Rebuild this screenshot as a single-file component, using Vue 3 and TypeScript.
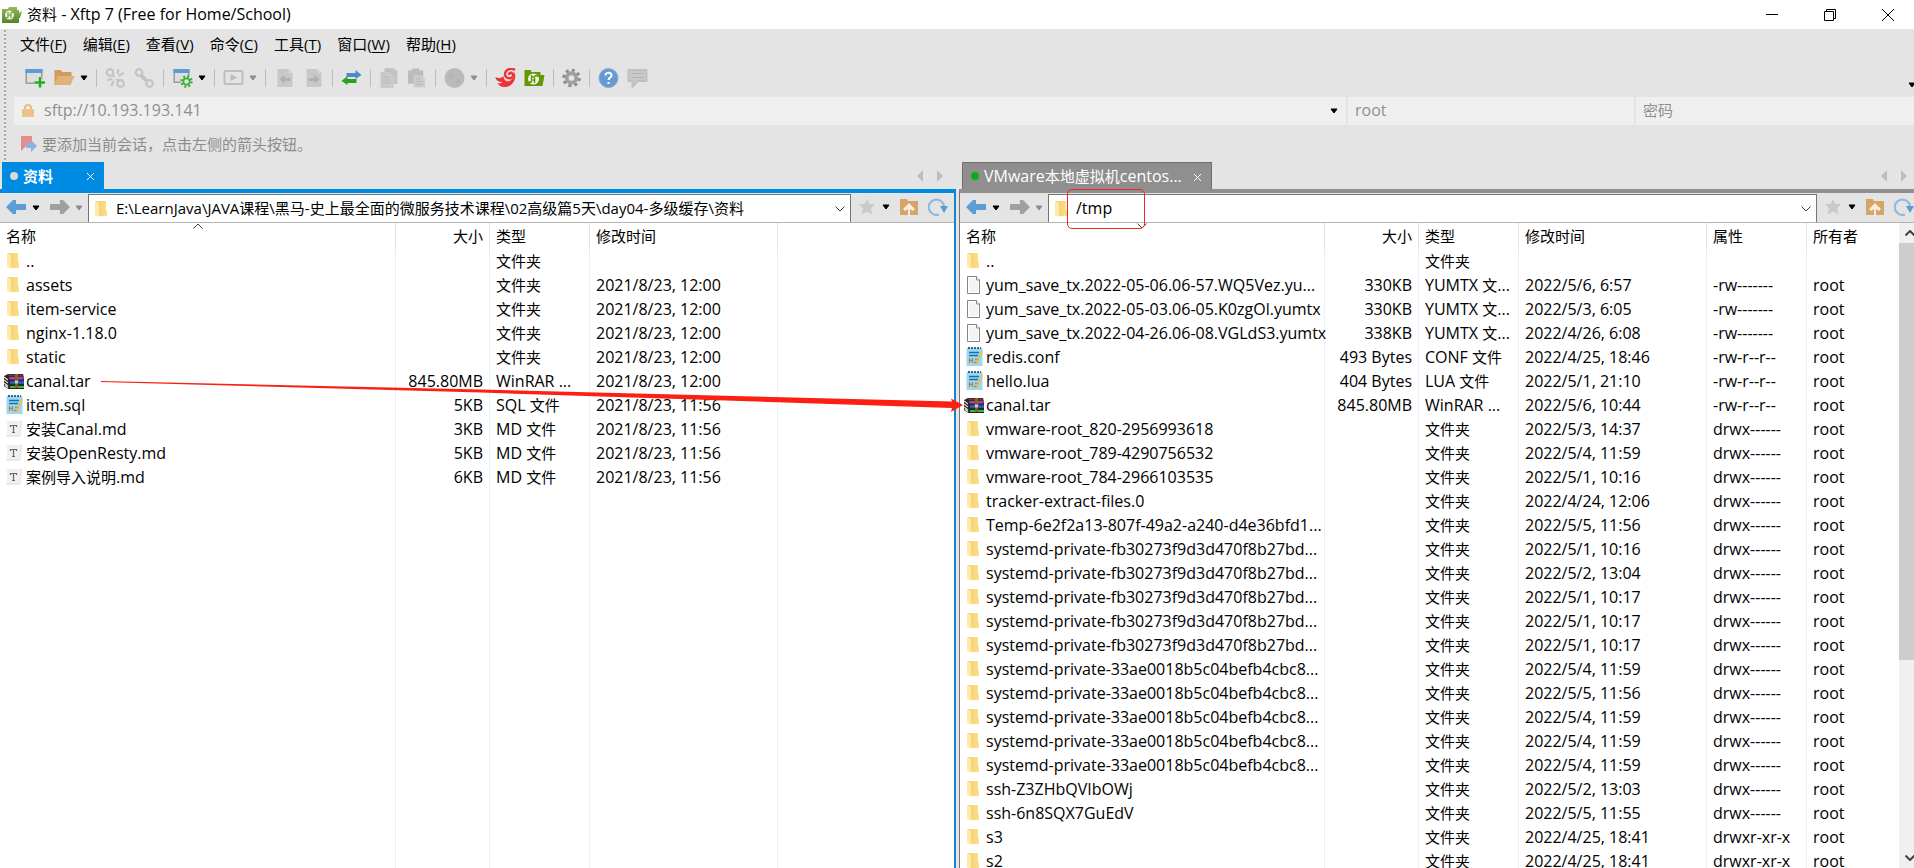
<script setup lang="ts">
interface FileRow {
  icon: 'folder' | 'file' | 'note' | 'rar' | 'md'
  name: string
  size?: string
  type: string
  date?: string
  attr?: string
  owner?: string
}

interface Run {
  text: string
  latin: boolean
}

// Latin runs are set one pixel larger than Chinese ones.
const runs = (text = ''): Run[] =>
  (text.match(/[\x20-\x7e]+|[^\x20-\x7e]+/g) ?? []).map((t) => ({ text: t, latin: t.charCodeAt(0) < 127 }))

const menus = [
  ['文件', 'F'],
  ['编辑', 'E'],
  ['查看', 'V'],
  ['命令', 'C'],
  ['工具', 'T'],
  ['窗口', 'W'],
  ['帮助', 'H'],
]

const tools = [
  'new', 'open', 'drop', 'sep',
  'unlink', 'link', 'sep',
  'props', 'drop', 'sep',
  'run', 'drop-off', 'sep',
  'left', 'right', 'sep',
  'swap', 'sep',
  'copy', 'paste', 'sep',
  'globe', 'drop-off', 'sep',
  'shell', 'xftp', 'sep',
  'gear', 'sep',
  'help', 'chat',
]

const toolLabels: Record<string, string> = {
  new: '新建', open: '打开', drop: '更多', unlink: '断开', link: '连接', props: '属性',
  run: '运行', 'drop-off': '更多', left: '向左传输', right: '向右传输', swap: '同步',
  copy: '复制', paste: '粘贴', globe: '浏览', shell: 'Xshell', xftp: 'Xftp',
  gear: '选项', help: '帮助', chat: '反馈',
}

const dir = (name: string, date?: string): FileRow => ({ icon: 'folder', name, type: '文件夹', date })

const localRows: FileRow[] = [
  dir('..'),
  dir('assets', '2021/8/23, 12:00'),
  dir('item-service', '2021/8/23, 12:00'),
  dir('nginx-1.18.0', '2021/8/23, 12:00'),
  dir('static', '2021/8/23, 12:00'),
  { icon: 'rar', name: 'canal.tar', size: '845.80MB', type: 'WinRAR ...', date: '2021/8/23, 12:00' },
  { icon: 'note', name: 'item.sql', size: '5KB', type: 'SQL 文件', date: '2021/8/23, 11:56' },
  { icon: 'md', name: '安装Canal.md', size: '3KB', type: 'MD 文件', date: '2021/8/23, 11:56' },
  { icon: 'md', name: '安装OpenResty.md', size: '5KB', type: 'MD 文件', date: '2021/8/23, 11:56' },
  { icon: 'md', name: '案例导入说明.md', size: '6KB', type: 'MD 文件', date: '2021/8/23, 11:56' },
]

const rdir = (name: string, date: string, attr = 'drwx------'): FileRow => ({
  ...dir(name, date), attr, owner: 'root',
})

const remoteRows: FileRow[] = [
  dir('..'),
  { icon: 'file', name: 'yum_save_tx.2022-05-06.06-57.WQ5Vez.yu...', size: '330KB', type: 'YUMTX 文...', date: '2022/5/6, 6:57', attr: '-rw-------', owner: 'root' },
  { icon: 'file', name: 'yum_save_tx.2022-05-03.06-05.K0zgOl.yumtx', size: '330KB', type: 'YUMTX 文...', date: '2022/5/3, 6:05', attr: '-rw-------', owner: 'root' },
  { icon: 'file', name: 'yum_save_tx.2022-04-26.06-08.VGLdS3.yumtx', size: '338KB', type: 'YUMTX 文...', date: '2022/4/26, 6:08', attr: '-rw-------', owner: 'root' },
  { icon: 'note', name: 'redis.conf', size: '493 Bytes', type: 'CONF 文件', date: '2022/4/25, 18:46', attr: '-rw-r--r--', owner: 'root' },
  { icon: 'note', name: 'hello.lua', size: '404 Bytes', type: 'LUA 文件', date: '2022/5/1, 21:10', attr: '-rw-r--r--', owner: 'root' },
  { icon: 'rar', name: 'canal.tar', size: '845.80MB', type: 'WinRAR ...', date: '2022/5/6, 10:44', attr: '-rw-r--r--', owner: 'root' },
  rdir('vmware-root_820-2956993618', '2022/5/3, 14:37'),
  rdir('vmware-root_789-4290756532', '2022/5/4, 11:59'),
  rdir('vmware-root_784-2966103535', '2022/5/1, 10:16'),
  rdir('tracker-extract-files.0', '2022/4/24, 12:06'),
  rdir('Temp-6e2f2a13-807f-49a2-a240-d4e36bfd1...', '2022/5/5, 11:56'),
  rdir('systemd-private-fb30273f9d3d470f8b27bd...', '2022/5/1, 10:16'),
  rdir('systemd-private-fb30273f9d3d470f8b27bd...', '2022/5/2, 13:04'),
  rdir('systemd-private-fb30273f9d3d470f8b27bd...', '2022/5/1, 10:17'),
  rdir('systemd-private-fb30273f9d3d470f8b27bd...', '2022/5/1, 10:17'),
  rdir('systemd-private-fb30273f9d3d470f8b27bd...', '2022/5/1, 10:17'),
  rdir('systemd-private-33ae0018b5c04befb4cbc8...', '2022/5/4, 11:59'),
  rdir('systemd-private-33ae0018b5c04befb4cbc8...', '2022/5/5, 11:56'),
  rdir('systemd-private-33ae0018b5c04befb4cbc8...', '2022/5/4, 11:59'),
  rdir('systemd-private-33ae0018b5c04befb4cbc8...', '2022/5/4, 11:59'),
  rdir('systemd-private-33ae0018b5c04befb4cbc8...', '2022/5/4, 11:59'),
  rdir('ssh-Z3ZHbQVIbOWj', '2022/5/2, 13:03'),
  rdir('ssh-6n8SQX7GuEdV', '2022/5/5, 11:55'),
  rdir('s3', '2022/4/25, 18:41', 'drwxr-xr-x'),
  rdir('s2', '2022/4/25, 18:41', 'drwxr-xr-x'),
]

const panes = [
  {
    key: 'local',
    tab: '资料',
    path: 'E:\\LearnJava\\JAVA课程\\黑马-史上最全面的微服务技术课程\\02高级篇5天\\day04-多级缓存\\资料',
    rows: localRows,
    remote: false,
  },
  { key: 'remote', tab: 'VMware本地虚拟机centos...', path: '/tmp', rows: remoteRows, remote: true },
]

const cells = (r: FileRow, remote: boolean) => (remote ? [r.type, r.date, r.attr, r.owner] : [r.type, r.date, ''])
</script>

<template>
  <div class="window">
    <svg class="defs" aria-hidden="true">
      <defs>
        <linearGradient id="gold" x1="0" x2="1"><stop offset="0" stop-color="#f3cf6c" /><stop offset="1" stop-color="#fbdf89" /></linearGradient>
        <linearGradient id="mint" x1="0" y1="0" x2="0" y2="1"><stop offset="0" stop-color="#93b955" /><stop offset="1" stop-color="#53852b" /></linearGradient>
        <symbol id="i-folder" viewBox="0 0 20 20">
          <path d="M2 2h10v9l1 1v5H3z" fill="url(#gold)" />
          <path d="M1 2l4 2v14l-4-2z" fill="#ffe9a6" />
        </symbol>
        <symbol id="i-file" viewBox="0 0 20 20">
          <path d="M1.500 1.500h9l3 3v14h-12z" fill="#fff" stroke="#858585" />
          <path d="M3 3h7v3h2v11H3z" fill="#f4f4f4" />
          <path d="M10.500 1.500v3.500h3.500" fill="#fff" stroke="#858585" />
        </symbol>
        <symbol id="i-note" viewBox="0 0 20 20">
          <rect x="0.500" y="1" width="16" height="18" rx="1" fill="#9fd6f3" />
          <path d="M2 1h2M5 1h2M8 1h2M11 1h2M14 1h1" stroke="#3c667e" stroke-width="2" />
          <path d="M3 5.500h10M3 8.500h9" stroke="#087aa5" stroke-width="1.500" />
          <path d="M3.500 11v5M6.500 11v5M3.500 13.500h3M9 12.500h4M8 15.500h4" stroke="#b48743" stroke-width="1.300" fill="none" />
          <path d="M16 4l-5 12" stroke="#efbc43" stroke-width="1.800" />
        </symbol>
        <symbol id="i-md" viewBox="0 0 20 20">
          <path d="M1 3l15-1-1 15-3 1H-1l2-2z" fill="#e9e9e9" />
          <path d="M1 2h13v14H1z" fill="#f0f0f0" />
          <path d="M4.500 6.500h6M7.500 6.500v7M6 13.500h3M4.500 6v2M10.500 6v2" stroke="#686868" stroke-width="1.200" fill="none" />
        </symbol>
        <symbol id="i-rar" viewBox="0 0 20 20">
          <path d="M0 5l4-2h15l1 4v11H4l-4-3z" fill="#29251f" />
          <path d="M3 3.500h15l1 2H5z" fill="#663542" />
          <path d="M5 6h14.500v2.500H6z" fill="#a944a0" />
          <path d="M6 10h14v3H6z" fill="#2355d5" />
          <path d="M6 15h14v2H6z" fill="#20c33d" />
          <path d="M0 6l4 3M0 9l4 3M0 12l4 3M1 14l3 3" stroke="#ddd" stroke-width="1.200" />
          <path d="M12.500 3v14" stroke="#8d5c26" stroke-width="3" />
          <path d="M10.500 9h4v4h-4z" fill="#ccc" stroke="#555" />
        </symbol>
        <symbol id="i-new" viewBox="0 0 20 20">
          <path d="M0 1h17v15H0z" fill="#9b9b9b" /><path d="M1.500 5h14v9.500h-14z" fill="#dedede" /><path d="M0 1h17v4H0z" fill="#5a9cd5" />
          <path d="M14.500 9v10M9 14h10.500" stroke="#e4e4e4" stroke-width="4" /><path d="M14.500 9v10.500M9 14.500h10.500" stroke="#25ad21" stroke-width="2.500" />
        </symbol>
        <symbol id="i-open" viewBox="0 0 20 20">
          <path d="M0 2h6l2 2h9v4h2l-3 9H0z" fill="#cf9c5e" /><path d="M3 8h17l-4 9H0z" fill="#dfb27a" />
        </symbol>
        <symbol id="i-unlink" viewBox="0 0 20 20">
          <g fill="none" stroke="#c4c4c4" stroke-width="2.200"><circle cx="4.500" cy="4.500" r="3.300" /><circle cx="15" cy="15.500" r="3.300" /><path d="M7 7l2 2M11 11l2 2M13 1l-1 5M18 5l-5 3M2 12l5-1M6 18l2-5" /></g>
        </symbol>
        <symbol id="i-link" viewBox="0 0 20 20">
          <g fill="none" stroke="#c4c4c4" stroke-width="2.200"><circle cx="4.500" cy="4.500" r="3.300" /><circle cx="15" cy="15.500" r="3.300" /><path d="M7 6l6 7M6 8l5 5" /></g>
        </symbol>
        <symbol id="i-props" viewBox="0 0 20 20">
          <path d="M1 1h16v14H1z" fill="#9b9b9b" /><path d="M2.500 5h13v8.500h-13z" fill="#dedede" /><path d="M1 1h16v4H1z" fill="#5a9cd5" />
          <circle cx="14" cy="13.500" r="6" fill="#e4e4e4" /><circle cx="14" cy="13.500" r="5" fill="none" stroke="#3bb338" stroke-width="2.400" stroke-dasharray="1.960" />
          <circle cx="14" cy="13.500" r="3.200" fill="#e4e4e4" stroke="#3bb338" stroke-width="1.800" />
        </symbol>
        <symbol id="i-run" viewBox="0 0 20 20">
          <rect x="1" y="3" width="18" height="13" rx="1" fill="none" stroke="#bfbfbf" stroke-width="2" /><path d="M7 6l7 3.500L7 13z" fill="#bcbcbc" />
        </symbol>
        <symbol id="i-left" viewBox="0 0 20 20"><path d="M3 1h11l4 4v14H3z" fill="#c8c8c8" /><path d="M14 1v4h4" fill="#d8d8d8" /><path d="M5 11l5-4v3h6v3h-6v3z" fill="#b0b0b0" /></symbol>
        <symbol id="i-right" viewBox="0 0 20 20"><path d="M3 1h11l4 4v14H3z" fill="#c8c8c8" /><path d="M14 1v4h4" fill="#d8d8d8" /><path d="M16 11l-5-4v3H5v3h6v3z" fill="#b0b0b0" /></symbol>
        <symbol id="i-swap" viewBox="0 0 20 20"><path d="M5 5h9V2l6 5-6 4V9H5z" fill="#4c8bd0" /><path d="M15 11H6V8l-6 5 6 4v-2h9z" fill="#29a31f" /></symbol>
        <symbol id="i-copy" viewBox="0 0 20 20"><path d="M5 0h9l4 3v13H5z" fill="#c4c4c4" /><path d="M1 4h9l4 4v12H1z" fill="#cacaca" /><path d="M3 9h7M3 12h8M3 15h8M7 3h5M13 6h3" stroke="#b8b8b8" /></symbol>
        <symbol id="i-paste" viewBox="0 0 20 20"><path d="M0 2h4V0h8v2h4v14H0z" fill="#bcbcbc" /><path d="M6 7h8l4 4v9H6z" fill="#cdcdcd" /><path d="M8 11h5M8 14h8M8 17h8" stroke="#b5b5b5" /></symbol>
        <symbol id="i-globe" viewBox="0 0 20 20"><circle cx="10" cy="10" r="10" fill="#bababa" /><path d="M5 4l5 2-2 5-5-1zM12 10l4 2-2 5-3-2z" fill="#b4b4b4" /></symbol>
        <symbol id="i-shell" viewBox="0 0 20 20">
          <path d="M0 9c3 2 6 1 8-1 0 4 3 6 6 5 3-1 5-4 5-10 3 9-3 16-10 16-4 0-6-2-7-4 2 1 4 0 5-1-4 0-7-2-7-5z" fill="#ed3338" />
          <path d="M19.500 2C16-.5 10 1 9.500 6c0 5 8 6 8 1 0-3-4-3-4 0" fill="none" stroke="#ed3338" stroke-width="2.400" />
        </symbol>
        <symbol id="i-xftp" viewBox="0 0 20 20"><path d="M0 2h6l1 2h9v3h4l-2 11H0z" fill="#649704" /><circle cx="9" cy="11" r="5.500" fill="#f1f6e9" /><path d="M7 7v6c0 2-2 2-2 0M7 9h3M10 15V9c0-2 3-2 3 0M8 12h3" fill="none" stroke="#649704" stroke-width="1.400" /></symbol>
        <symbol id="i-gear" viewBox="0 0 20 20"><circle cx="10" cy="10" r="8" fill="none" stroke="#8d8d8d" stroke-width="3.500" stroke-dasharray="3.140" /><circle cx="10" cy="10" r="5" fill="none" stroke="#a0a0a0" stroke-width="4" /></symbol>
        <symbol id="i-help" viewBox="0 0 20 20"><circle cx="10" cy="10" r="9.500" fill="#659bd0" stroke="#8badce" /><path d="M7 7.500c0-4 6.500-3.500 6 0 0 2-3 2-3 4.500M10 14v2" fill="none" stroke="#fff" stroke-width="2" /></symbol>
        <symbol id="i-chat" viewBox="0 0 20 20"><path d="M1 2h18v11h-9l-5 6v-6H1z" fill="#c9c9c9" stroke="#c0c0c0" stroke-width="2" stroke-linejoin="round" /><path d="M4 5.500h12M4 9.500h12" stroke="#b5b5b5" /></symbol>
        <symbol id="i-drop" viewBox="0 0 8 20"><path d="M1 8h6L4 12z" fill="#000" stroke="#000" /></symbol>
        <symbol id="i-drop-off" viewBox="0 0 8 20"><path d="M1 8h6L4 12z" fill="#8b8b8b" stroke="#8b8b8b" /></symbol>
        <symbol id="i-arrow" viewBox="0 0 20 16"><path d="M0 8l7-7h3v4h10v6H10v4H7z" /></symbol>
        <symbol id="i-chevron" viewBox="0 0 10 6"><path d="M0.500 0.500l4.500 4.500 4.500-4.500" fill="none" stroke="#404040" stroke-width="var(--chev, 1)" /></symbol>
        <symbol id="i-star" viewBox="0 0 18 18"><path d="M9 1l2.500 5H17l-4 4.500 1.500 6L9 13.500l-5.500 3 1.500-6L1 6h5.500z" fill="#cacaca" /></symbol>
        <symbol id="i-up" viewBox="0 0 18 18"><path d="M0 1h7l1 2h10v14H0z" fill="#d8a465" /><path d="M9 5l6 6-2 2-3-2v7H8v-7l-3 2-2-2z" fill="#f5eee5" /></symbol>
        <symbol id="i-refresh" viewBox="0 0 20 18"><path d="M11 16.500A7.700 7.700 0 1 1 16 8" fill="none" stroke="#8fb8de" stroke-width="2.200" /><path d="M12 8h8l-4 7z" fill="#5b9bd5" /></symbol>
      </defs>
    </svg>

    <header class="titlebar">
      <svg class="logo" viewBox="0 0 20 16"><path d="M0 2h6l1-2h8v3h2v3l3-2-2 7h-1v5H0z" fill="url(#mint)" /><circle cx="7.500" cy="8" r="4.500" fill="#edf5df" /><path d="M6 5v5c0 1-2 1-2 0M9 11V6c0-1 2-1 2 0M6 8h3" fill="none" stroke="#6b9b3a" stroke-width="1.200" /></svg>
      <h1>资料<span class="latin"> - Xftp 7 (Free for Home/School)</span></h1>
      <div class="win-buttons">
        <button aria-label="最小化"><svg viewBox="0 0 12 12"><path d="M0 5.500h12" /></svg></button>
        <button aria-label="还原"><svg viewBox="0 0 12 12"><path d="M0.500 2.500h9v9h-9zM2.500 2.500v-2h9v9h-2" /></svg></button>
        <button aria-label="关闭"><svg viewBox="0 0 12 12"><path d="M0 0l12 12M12 0L0 12" /></svg></button>
      </div>
    </header>

    <div class="bars">
      <nav class="menubar">
        <button v-for="m in menus" :key="m[1]">{{ m[0] }}(<u>{{ m[1] }}</u>)</button>
      </nav>
      <div class="toolbar">
        <template v-for="(t, i) in tools" :key="i">
          <span v-if="t === 'sep'" class="sep"></span>
          <button v-else :class="['tool', t]" :aria-label="toolLabels[t]"><svg><use :href="'#i-' + t" /></svg></button>
        </template>
        <button class="tool overflow" aria-label="工具栏选项"><svg><use href="#i-drop" /></svg></button>
      </div>
      <div class="session">
        <label class="field host">
          <svg class="lock" viewBox="0 0 12 14"><path d="M3 7V4a3 3 0 0 1 6 0v3" fill="none" stroke="#e6bd83" stroke-width="2" /><rect y="5" width="12" height="8" rx="1" fill="#eac28b" /></svg>
          <input class="latin" aria-label="主机" value="sftp://10.193.193.141" />
          <button class="tool drop" aria-label="历史"><svg><use href="#i-drop" /></svg></button>
        </label>
        <div class="field user"><input class="latin" aria-label="用户名" placeholder="root" /></div>
        <div class="field pass"><input aria-label="密码" type="password" placeholder="密码" /></div>
      </div>
      <div class="hint">
        <svg viewBox="0 0 16 16"><path d="M0 0h11v10H5l-5 5z" fill="#e58c8c" /><path d="M5 7h5V4l6 6-6 6v-4H5z" fill="#8fb2d8" /></svg>
        <span>要添加当前会话，点击左侧的箭头按钮。</span>
      </div>
    </div>

    <main class="panes">
      <section v-for="p in panes" :key="p.key" :class="['pane', p.key]">
        <div class="tabs">
          <div class="tab"><i class="dot"></i><span><span v-for="(t, k) in runs(p.tab)" :key="k" :class="{ latin: t.latin }">{{ t.text }}</span></span>
            <button aria-label="关闭标签"><svg viewBox="0 0 7 7"><path d="M0 0l7 7M7 0L0 7" /></svg></button>
          </div>
          <div class="tab-nav">
            <button aria-label="上一个"><svg viewBox="0 0 6 12"><path d="M6 0v12L0 6z" /></svg></button>
            <button aria-label="下一个"><svg viewBox="0 0 6 12"><path d="M0 0v12l6-6z" /></svg></button>
          </div>
        </div>
        <div class="content">
          <div class="address">
            <button class="nav back" aria-label="后退"><svg><use href="#i-arrow" /></svg></button>
            <button class="tool drop" aria-label="后退历史"><svg><use href="#i-drop" /></svg></button>
            <button class="nav forward" aria-label="前进"><svg><use href="#i-arrow" /></svg></button>
            <button class="tool drop" aria-label="前进历史"><svg><use href="#i-drop-off" /></svg></button>
            <div class="path">
              <svg class="icon"><use href="#i-folder" /></svg>
              <input :class="{ latin: p.remote }" aria-label="路径" :value="p.path" />
              <button aria-label="路径列表"><svg class="chev"><use href="#i-chevron" /></svg></button>
              <span v-if="p.remote" class="mark"></span>
            </div>
            <div class="actions">
              <button class="act" aria-label="收藏"><svg><use href="#i-star" /></svg></button>
              <button class="tool drop" aria-label="收藏列表"><svg><use href="#i-drop" /></svg></button>
              <button class="act" aria-label="上级目录"><svg><use href="#i-up" /></svg></button>
              <button class="act" aria-label="刷新"><svg><use href="#i-refresh" /></svg></button>
            </div>
          </div>
          <div class="list">
            <table>
              <colgroup>
                <col class="c-name" /><col class="c-size" /><col class="c-type" /><col class="c-date" />
                <template v-if="p.remote"><col class="c-attr" /><col /></template>
                <col v-else />
              </colgroup>
              <thead>
                <tr>
                  <th>名称<svg class="sort"><use href="#i-chevron" /></svg></th>
                  <th class="num">大小</th>
                  <th>类型</th>
                  <th>修改时间</th>
                  <template v-if="p.remote"><th>属性</th><th>所有者</th></template>
                  <th v-else></th>
                </tr>
              </thead>
              <tbody>
                <tr v-for="(r, i) in p.rows" :key="i">
                  <td>
                    <div class="name">
                      <svg :class="['icon', r.icon]"><use :href="'#i-' + r.icon" /></svg>
                      <span><span v-for="(t, k) in runs(r.name)" :key="k" :class="{ latin: t.latin }">{{ t.text }}</span></span>
                    </div>
                  </td>
                  <td class="num"><span class="latin">{{ r.size }}</span></td>
                  <td v-for="(c, j) in cells(r, p.remote)" :key="j"><span v-for="(t, k) in runs(c)" :key="k" :class="{ latin: t.latin }">{{ t.text }}</span></td>
                </tr>
                <tr v-if="!p.remote" class="filler"><td v-for="n in 5" :key="n"></td></tr>
              </tbody>
            </table>
            <div v-if="p.remote" class="scroll">
              <button aria-label="向上滚动"><svg class="chev up"><use href="#i-chevron" /></svg></button>
              <div class="track"><div class="thumb"></div></div>
              <button aria-label="向下滚动"><svg class="chev"><use href="#i-chevron" /></svg></button>
            </div>
          </div>
        </div>
      </section>
      <svg class="pointer" viewBox="0 0 862 34" aria-hidden="true"><path d="M0 1L380 9.500 851 21.500 850 18.500 862 25 850 32 851 28 380 12.500 0 2z" fill="#fb2012" /></svg>
    </main>
  </div>
</template>

<style>
body {
  margin: 0;
}
</style>

<style scoped>
.window {
  display: flex;
  flex-direction: column;
  height: 100vh;
  overflow: hidden;
  background: #e4e4e4;
  color: #000;
  font: 15px/20px "Open Sans", "Noto Sans CJK SC", sans-serif;
}
.window * {
  box-sizing: border-box;
}
.defs {
  position: absolute;
  width: 0;
  height: 0;
}
button {
  padding: 0;
  border: 0;
  background: none;
  color: inherit;
  font: inherit;
}
button svg {
  display: block;
}
input {
  flex: 1;
  min-width: 0;
  padding: 0 0 2px;
  border: 0;
  background: none;
  color: inherit;
  font: inherit;
  outline: 0;
}
.latin {
  font-size: 16px;
  white-space: pre;
}
.titlebar {
  display: flex;
  align-items: center;
  flex: none;
  height: 29px;
  padding-left: 2px;
  background: #fff;
}
.logo {
  width: 20px;
  height: 16px;
  margin-right: 5px;
}
h1 {
  flex: 1;
  margin: 0;
  padding-bottom: 2px;
  font-size: 15px;
  font-weight: 400;
}
.win-buttons {
  display: flex;
  margin-right: -3px;
}
.win-buttons button {
  display: grid;
  place-items: center;
  width: 58px;
  height: 29px;
}
.win-buttons svg {
  width: 12px;
  height: 12px;
  fill: none;
  stroke: #000;
}
.bars {
  position: relative;
  flex: none;
  padding-left: 14px;
}
.bars::before {
  content: "";
  position: absolute;
  left: 4px;
  top: 1px;
  bottom: 2px;
  width: 2px;
  background: repeating-linear-gradient(#a8a8a8 0 2px, #f2f2f2 2px 3px, #e4e4e4 3px 4px);
}
.menubar {
  display: flex;
  gap: 16px;
  height: 31px;
  padding: 0 0 1px 6px;
}
.menubar u {
  text-underline-offset: 2px;
}
.toolbar {
  display: flex;
  align-items: center;
  gap: 8px;
  height: 37px;
  padding: 0 0 2px 11px;
}
.tool {
  flex: none;
}
.tool svg {
  width: 21px;
  height: 20px;
}
.tool.paste svg,
.tool.gear svg {
  width: 19px;
}
.tool.drop svg,
.tool.drop-off svg,
.tool.overflow svg {
  width: 8px;
}
.toolbar .drop,
.toolbar .drop-off {
  margin-left: -3px;
}
.toolbar .overflow {
  align-self: flex-end;
  margin-left: auto;
  margin-right: -2px;
}
.sep {
  width: 1px;
  height: 18px;
  background: #bdbdbd;
}
.session {
  display: grid;
  grid-template-columns: 1332fr 286fr 278fr;
  gap: 2px;
  height: 28px;
  color: #8f8f8f;
}
.field {
  display: flex;
  align-items: center;
  padding: 0 8px;
  background: #efefef;
}
.user,
.pass {
  padding: 0 7px;
}
.field input::placeholder {
  color: #8f8f8f;
  opacity: 1;
}
.lock {
  width: 12px;
  height: 14px;
  margin-right: 10px;
}
.hint {
  display: flex;
  align-items: center;
  gap: 5px;
  height: 37px;
  padding-left: 7px;
  color: #8c8c8c;
}
.hint svg {
  width: 16px;
  height: 16px;
}
.panes {
  position: relative;
  display: grid;
  grid-template-columns: minmax(0, 956fr) minmax(0, 961fr);
  gap: 3px;
  flex: 1;
  min-height: 0;
  margin-right: -6px;
}
.pane {
  display: flex;
  flex-direction: column;
  min-height: 0;
}
.tabs {
  display: flex;
  justify-content: space-between;
  flex: none;
  height: 27px;
  padding: 0 13px 0 2px;
}
.remote .tabs {
  padding-left: 3px;
}
.tab {
  display: flex;
  align-items: center;
  padding-left: 8px;
  color: #fff;
  background: #008be3;
}
.local .tab {
  width: 102px;
  font-weight: 700;
}
.remote .tab {
  width: 250px;
  background: #8f8f8f;
  border: 1px solid #6f6f6f;
  border-bottom: 0;
}
.dot {
  width: 8px;
  height: 8px;
  margin-right: 5px;
  border-radius: 50%;
  background: #d8d8d8;
}
.remote .dot {
  background: #0eae0e;
}
.tab button {
  margin: 2px 10px 0 auto;
}
.tab button svg {
  width: 7px;
  height: 7px;
  stroke: #fff;
}
.tab-nav {
  display: flex;
  gap: 14px;
}
.tab-nav svg {
  width: 6px;
  height: 12px;
  fill: #bdbdbd;
}
.content {
  display: flex;
  flex-direction: column;
  flex: 1;
  min-height: 0;
  border-top: 4px solid #008be3;
  border-right: 2px solid #0f86ce;
}
.remote .content {
  border-top-color: #8f8f8f;
  border-right: 0;
  border-left: 1px solid #757575;
}
.address {
  display: flex;
  align-items: center;
  flex: none;
  height: 30px;
  padding: 1px 5px 0 6px;
  border-bottom: 1px solid #b5b5b5;
}
.nav {
  padding-bottom: 2px;
}
.nav svg {
  width: 20px;
  height: 16px;
}
.nav.back {
  margin-right: 6px;
  fill: #5b9dd6;
}
.nav.forward {
  margin: 0 5px 0 10px;
  transform: scaleX(-1);
  fill: #a0a0a0;
}
.path {
  position: relative;
  display: flex;
  align-items: center;
  flex: 1;
  min-width: 0;
  height: 28px;
  margin-left: 5px;
  padding: 0 5px;
  border: 1px solid #757575;
  border-bottom: 0;
  background: #fff;
}
.path input {
  margin-left: 2px;
}
.chev {
  width: 10px;
  height: 6px;
}
.chev.up {
  transform: scaleY(-1);
}
.mark {
  position: absolute;
  left: 18px;
  top: -6px;
  width: 78px;
  height: 40px;
  border: 1px solid #f0281e;
  border-radius: 5px;
  z-index: 2;
}
.actions {
  display: flex;
  align-items: center;
  padding: 0 1px 2px 7px;
}
.act svg {
  width: 18px;
  height: 18px;
}
.act:last-child svg {
  width: 20px;
}
.actions .drop {
  margin: 0 10px 0 6px;
}
.act:last-child {
  margin-left: 10px;
}
.icon {
  flex: none;
  width: 20px;
  height: 20px;
}
.icon.rar {
  margin: 0 2px 0 -2px;
}
.list {
  display: flex;
  flex: 1;
  min-height: 0;
  overflow: hidden;
  background: #fff;
}
table {
  flex: 1;
  width: 100%;
  min-width: 0;
  height: 100%;
  table-layout: fixed;
  border-collapse: separate;
  border-spacing: 0;
}
.c-name {
  width: 396px;
}
.remote .c-name {
  width: 365px;
}
.c-size {
  width: 94px;
}
.c-type,
.c-attr {
  width: 100px;
}
.c-date {
  width: 188px;
}
th,
td {
  height: 24px;
  padding: 0 0 0 6px;
  border-right: 1px solid #e8f1fb;
  font-weight: 400;
  line-height: 20px;
  text-align: left;
  white-space: nowrap;
}
th {
  position: relative;
  height: 26px;
  border-right-color: #e2e2e2;
}
th:last-child,
td:last-child {
  border-right: 0;
}
.num {
  padding: 0 6px 0 0;
  text-align: right;
}
.filler td {
  height: auto;
}
.sort {
  position: absolute;
  left: 50%;
  top: 0;
  width: 10px;
  height: 6px;
  margin-left: -5px;
  transform: scaleY(-1);
}
.remote .sort {
  transform: none;
}
.name {
  display: flex;
  align-items: center;
}
.scroll {
  --chev: 2;
  display: flex;
  flex-direction: column;
  flex: none;
  width: 21px;
  background: #f0f0f0;
}
.scroll button {
  display: grid;
  place-items: center;
  height: 20px;
}
.track {
  flex: 1;
}
.thumb {
  height: 69%;
  background: #cdcdcd;
}
.pointer {
  position: absolute;
  left: 101px;
  top: 218px;
  width: 862px;
  height: 34px;
  pointer-events: none;
}
</style>
